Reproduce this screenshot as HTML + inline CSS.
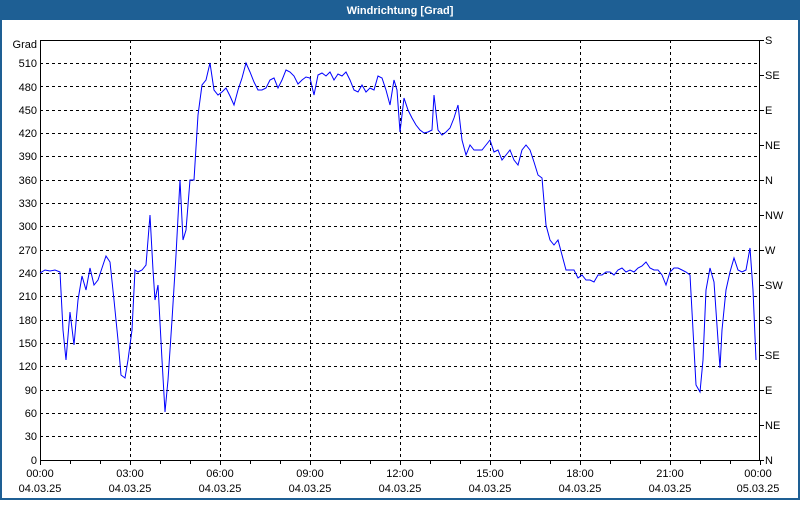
<!DOCTYPE html>
<html><head><meta charset="utf-8"><style>
html,body{margin:0;padding:0;background:#fff;}
body{width:800px;height:500px;overflow:hidden;}
</style></head><body>
<svg width="800" height="500" xmlns="http://www.w3.org/2000/svg" font-family="Liberation Sans, sans-serif" font-size="11">
<rect x="0" y="0" width="800" height="500" fill="#1e5f94"/>
<rect x="2" y="20" width="796" height="478" fill="#fff"/>
<text x="400" y="14" fill="#fff" font-weight="bold" text-anchor="middle">Windrichtung [Grad]</text>
<g stroke="#000" stroke-width="1" stroke-dasharray="3,3" fill="none">
<path d="M40 63.5H760M40 86.5H760M40 110.5H760M40 133.5H760M40 156.5H760M40 180.5H760M40 203.5H760M40 226.5H760M40 250.5H760M40 273.5H760M40 296.5H760M40 320.5H760M40 343.5H760M40 366.5H760M40 390.5H760M40 413.5H760M40 436.5H760"/>
<path d="M130.5 40V460M220.5 40V460M310.5 40V460M400.5 40V460M490.5 40V460M580.5 40V460M670.5 40V460"/>
</g>
<rect x="40.5" y="40.5" width="719" height="420" fill="none" stroke="#000"/>
<g stroke="#000">
<path d="M40.5 460v5M70.5 460v4M100.5 460v4M130.5 460v5M160.5 460v4M190.5 460v4M220.5 460v5M250.5 460v4M280.5 460v4M310.5 460v5M340.5 460v4M370.5 460v4M400.5 460v5M430.5 460v4M460.5 460v4M490.5 460v5M520.5 460v4M550.5 460v4M580.5 460v5M610.5 460v4M640.5 460v4M670.5 460v5M700.5 460v4M730.5 460v4M760.5 460v5"/>
<path d="M760 40.5h4M760 75.5h4M760 110.5h4M760 145.5h4M760 180.5h4M760 215.5h4M760 250.5h4M760 285.5h4M760 320.5h4M760 355.5h4M760 390.5h4M760 425.5h4M760 460.5h4"/>
</g>
<g fill="#000" text-anchor="end">
<text x="37" y="48">Grad</text>
<text x="37" y="67">510</text><text x="37" y="91">480</text><text x="37" y="114">450</text><text x="37" y="137">420</text><text x="37" y="160">390</text><text x="37" y="184">360</text><text x="37" y="207">330</text><text x="37" y="230">300</text><text x="37" y="254">270</text><text x="37" y="277">240</text><text x="37" y="300">210</text><text x="37" y="324">180</text><text x="37" y="347">150</text><text x="37" y="370">120</text><text x="37" y="394">90</text><text x="37" y="417">60</text><text x="37" y="440">30</text><text x="37" y="464">0</text>
</g>
<g fill="#000">
<text x="765" y="44">S</text><text x="765" y="79">SE</text><text x="765" y="114">E</text><text x="765" y="149">NE</text><text x="765" y="184">N</text><text x="765" y="219">NW</text><text x="765" y="254">W</text><text x="765" y="289">SW</text><text x="765" y="324">S</text><text x="765" y="359">SE</text><text x="765" y="394">E</text><text x="765" y="429">NE</text><text x="765" y="464">N</text>
</g>
<g fill="#000" text-anchor="middle">
<text x="40" y="477">00:00</text><text x="130" y="477">03:00</text><text x="220" y="477">06:00</text><text x="310" y="477">09:00</text><text x="400" y="477">12:00</text><text x="490" y="477">15:00</text><text x="580" y="477">18:00</text><text x="670" y="477">21:00</text><text x="758" y="477">00:00</text>
<text x="40" y="492">04.03.25</text><text x="130" y="492">04.03.25</text><text x="220" y="492">04.03.25</text><text x="310" y="492">04.03.25</text><text x="400" y="492">04.03.25</text><text x="490" y="492">04.03.25</text><text x="580" y="492">04.03.25</text><text x="670" y="492">04.03.25</text><text x="758" y="492">05.03.25</text>
</g>
<polyline fill="none" stroke="#0000ff" stroke-width="1" points="40,273 45,270 50,271 55,270 60,272 63,330 66,360 70,312 74,345 78,300 82,276 86,290 90,268 94,285 98,280 102,268 106,256 110,262 114,300 118,340 121,375 125,378 128,360 132,330 135,270 138,272 142,270 146,265 150,215 153,270 155,300 158,285 162,360 165,412 168,380 172,320 176,255 180,180 183,240 186,230 190,180 194,180 198,115 202,85 206,80 210,63 214,90 218,95 222,92 226,88 230,96 234,105 238,90 242,78 246,63 250,72 254,82 258,90 262,90 266,88 270,80 274,78 278,88 282,80 286,70 290,72 294,76 298,84 302,80 306,77 310,78 314,95 318,75 322,73 326,76 330,72 334,80 338,74 342,76 346,72 350,80 354,90 358,92 362,85 366,92 370,88 374,90 378,76 382,78 386,90 390,105 394,80 397,90 400,132 404,98 408,110 412,118 416,125 420,130 424,133 428,132 432,130 434,95 438,130 442,135 446,132 450,128 454,118 458,105 462,140 466,155 470,145 474,150 478,150 482,150 486,145 490,140 494,152 498,150 502,160 506,155 510,150 514,160 518,165 522,150 526,145 530,150 534,162 538,175 542,178 546,225 550,240 554,245 558,240 562,255 566,270 570,270 574,270 578,278 582,275 586,280 590,280 594,282 598,275 602,275 606,272 610,272 614,275 618,270 622,268 626,272 630,270 634,272 638,268 642,266 646,262 650,268 654,270 658,270 662,275 666,285 670,272 674,268 678,268 682,270 686,272 690,275 693,330 696,385 700,392 703,360 706,290 710,268 714,282 718,340 720,368 722,330 726,290 730,272 734,258 738,270 742,272 746,270 750,248 753,290 756,360"/>
</svg>
</body></html>
